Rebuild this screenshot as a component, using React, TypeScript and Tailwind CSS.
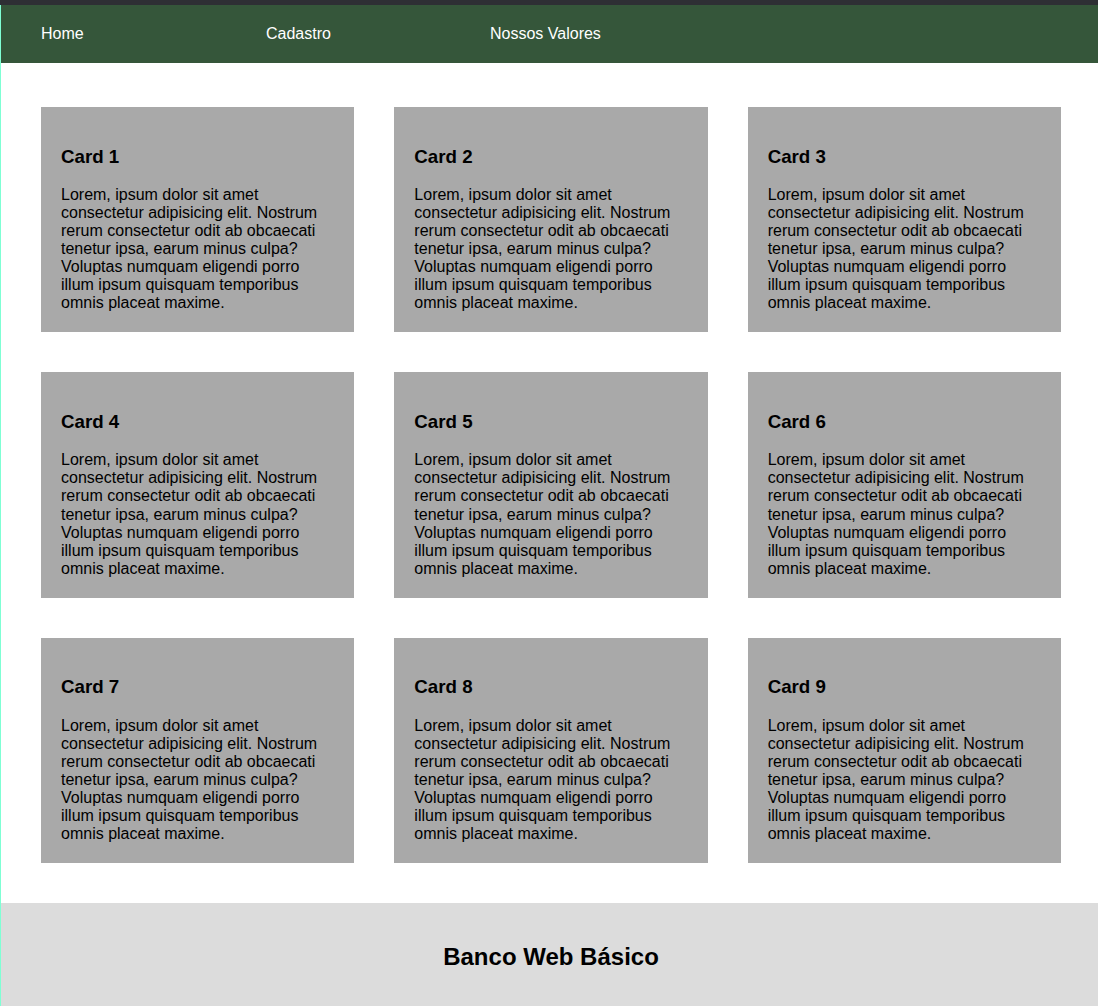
/**
 * Página inicial do Banco Web Básico
 * Barra de navegação, grade de cards e rodapé
 */

const links = [
  { label: 'Home', largura: 'w-[225px]' },
  { label: 'Cadastro', largura: 'w-[224px]' },
  { label: 'Nossos Valores', largura: 'w-auto' }
];

const texto =
  'Lorem, ipsum dolor sit amet consectetur adipisicing elit. Nostrum rerum consectetur odit ab obcaecati tenetur ipsa, earum minus culpa? Voluptas numquam eligendi porro illum ipsum quisquam temporibus omnis placeat maxime.';

const cards = [1, 2, 3, 4, 5, 6, 7, 8, 9];

export default function App() {
  return (
    <div className="w-full overflow-hidden bg-white">
      <div className="w-[1101px] min-h-screen border-l border-[#7fffd4] font-['Liberation_Sans',Arial,sans-serif] text-black">
        {/* faixa escura do topo */}
        <div className="h-[5px] bg-[#2e2f34] -ml-px" />

        {/* Navegação */}
        <nav className="h-[58px] bg-[#35563a]">
          <ul className="flex pl-[40px] pt-[17px]">
            {links.map((link) => (
              <li key={link.label} className={link.largura}>
                <a href="#" className="text-[16px] leading-[18px] text-white">
                  {link.label}
                </a>
              </li>
            ))}
          </ul>
        </nav>

        {/* Grade de cards */}
        <main className="px-[40px] pt-[44px] pb-[40px]">
          <div className="grid grid-cols-3 gap-[40px]">
            {cards.map((n) => (
              <div key={n} className="bg-[#a9a9a9] px-[20px] pt-[20px] pb-[20px]">
                <h3 className="mt-[18.72px] mb-[18.72px] text-[18.72px] leading-[21.5px] font-bold">
                  Card {n}
                </h3>
                <p className="text-[16px] leading-[18.07px]">{texto}</p>
              </div>
            ))}
          </div>
        </main>

        {/* Rodapé */}
        <footer className="bg-[#dcdcdc] py-[20px] text-center">
          <h2 className="my-[19.5px] text-[24px] leading-[27.6px] font-bold">Banco Web Básico</h2>
        </footer>
      </div>
    </div>
  );
}
